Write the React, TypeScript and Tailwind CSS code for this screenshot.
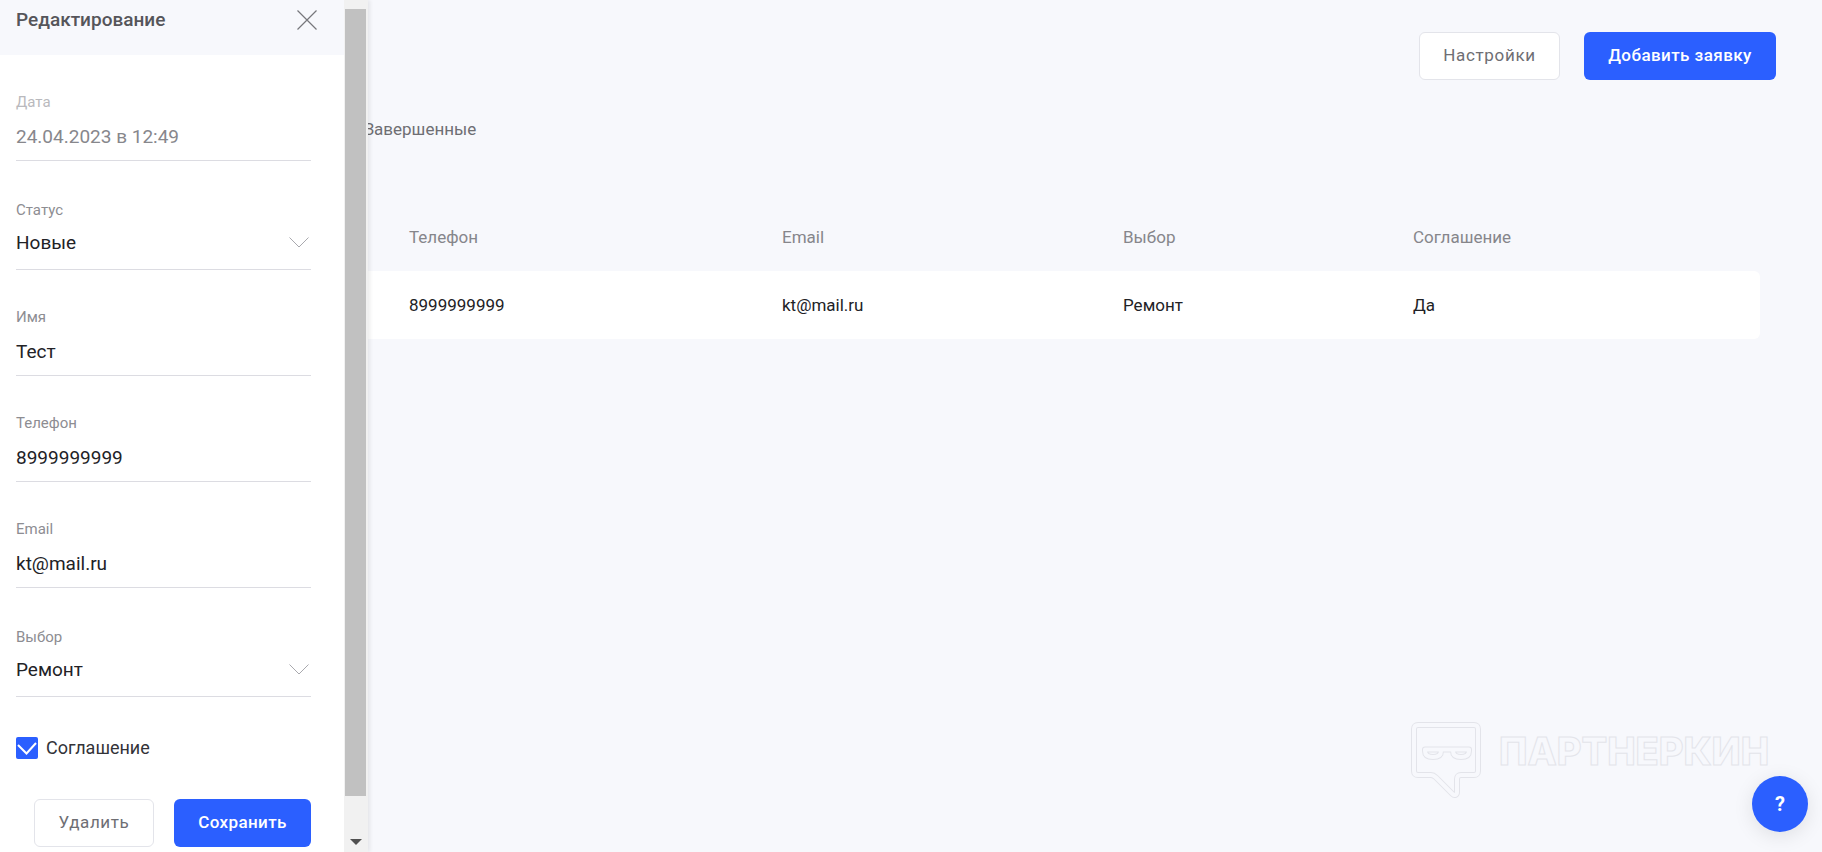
const font = { fontFamily: "Roboto, sans-serif" };

function Chevron() {
  return (
    <svg width="20" height="11" viewBox="0 0 20 11" fill="none" className="shrink-0 mr-[2px]">
      <path d="M0.5 0.5L10 10L19.5 0.5" stroke="#a9a9ae" strokeWidth="1" />
    </svg>
  );
}

function Field({ label, value, className, inner, select, muted, labelColor }: { label: string; value: string; className: string; inner: string; select?: boolean; muted?: boolean; labelColor?: string }) {
  return (
    <div className={className}>
      <div className={`text-[15px] leading-[20px] ${labelColor ?? "text-[#8d8d92]"}`}>{label}</div>
      <div className={`flex items-center justify-between border-b border-[#dcdce2] ${inner}`}>
        <span className={`text-[19px] leading-[28px] ${muted ? "text-[#87878c]" : "text-[#222226]"}`}>{value}</span>
        {select && <Chevron />}
      </div>
    </div>
  );
}

function Logo() {
  const bubble = "M9 5H65C67.5 5 69 6.5 69 9V51C69 53.5 67.5 55 65 55H52C49.5 55 48 56.5 48 59V72C48 75 45.5 76 43.5 74L27 57.5C25.5 56 24 55 22 55H9C6.5 55 5 53.5 5 51V9C5 6.5 6.5 5 9 5Z";
  const glasses = "M16 29.5H32V31C32 35 29 37 24 37C19 37 16 35 16 31ZM44 29.5H60V31C60 35 57 37 52 37C47 37 44 35 44 31ZM32 29.5H44";
  return (
    <svg width="76" height="82" viewBox="0 0 76 82" fill="none" className="shrink-0">
      <path d={bubble} stroke="#e3e4ea" strokeWidth="6" strokeLinejoin="round" />
      <path d={bubble} stroke="#f7f8fc" strokeWidth="4" strokeLinejoin="round" />
      <path d={glasses} stroke="#e3e4ea" strokeWidth="6" strokeLinejoin="round" />
      <path d={glasses} stroke="#f7f8fc" strokeWidth="4" strokeLinejoin="round" />
    </svg>
  );
}

export default function App() {
  return (
    <div style={font} className="flex h-[852px] w-[1822px] overflow-hidden bg-[#f7f8fc] relative">
      <aside className="flex shrink-0 h-full relative z-10 shadow-[2px_0_4px_rgba(0,0,0,0.08)]">
        <div className="w-[344px] bg-white flex flex-col">
          <div className="h-[55px] bg-[#f7f8fc] flex items-start justify-between pl-[16px] pr-[27px] pt-[7px]">
            <span className="text-[19px] leading-[26px] font-medium text-[#55555a]">Редактирование</span>
            <svg width="20" height="20" viewBox="0 0 20 20" fill="none" className="mt-[3px]">
              <path d="M0.5 0.5L19.5 19.5M19.5 0.5L0.5 19.5" stroke="#77777c" strokeWidth="1.2" />
            </svg>
          </div>
          <div className="pl-[16px] pr-[33px] pt-[37px]">
            <Field className="mb-[39px]" inner="h-[49px] pt-[1px]" label="Дата" value="24.04.2023 в 12:49" muted labelColor="text-[#b9b9bd]" />
            <Field className="mb-[37px]" inner="h-[50px] pb-[4px]" label="Статус" value="Новые" select />
            <Field className="mb-[37px]" inner="h-[49px] pt-[1px]" label="Имя" value="Тест" />
            <Field className="mb-[37px]" inner="h-[49px] pt-[1px]" label="Телефон" value="8999999999" />
            <Field className="mb-[39px]" inner="h-[49px] pt-[1px]" label="Email" value="kt@mail.ru" />
            <Field className="mb-[40px]" inner="h-[50px] pb-[4px]" label="Выбор" value="Ремонт" select />
            <div className="flex items-center gap-[8px] h-[22px]">
              <span className="w-[22px] h-[22px] rounded-[2px] bg-[#2b5fff] flex items-center justify-center">
                <svg width="22" height="22" viewBox="0 0 22 22" fill="none">
                  <path d="M2 8L10.5 16.5L20 6" stroke="white" strokeWidth="2" />
                </svg>
              </span>
              <span className="text-[18px] leading-[20px] text-[#333338]">Соглашение</span>
            </div>
            <div className="flex justify-end gap-[20px] mt-[40px]">
              <button className="w-[120px] h-[48px] rounded-[6px] bg-white border border-[#e3e4ea] text-[17px] tracking-[0.6px] text-[#6e6e73]">Удалить</button>
              <button className="w-[137px] h-[48px] rounded-[6px] bg-[#2b5fff] text-[17px] font-medium tracking-[0.4px] text-white">Сохранить</button>
            </div>
          </div>
        </div>
        <div className="w-[24px] bg-[#f1f1f1] flex flex-col items-start pl-[1px] pt-[9px]">
          <div className="w-[21px] h-[787px] bg-[#c1c1c1]" />
          <svg width="12" height="6" viewBox="0 0 12 6" className="ml-[5px] mt-[43px]">
            <path d="M0 0H12L6 6Z" fill="#505050" />
          </svg>
        </div>
      </aside>

      <main className="flex-1 min-w-0 flex flex-col">
        <div className="flex justify-end gap-[24px] pt-[32px] pr-[46px]">
          <button className="w-[141px] h-[48px] rounded-[6px] bg-white border border-[#e3e4ea] text-[17px] tracking-[0.66px] text-[#6e6e73]">Настройки</button>
          <button className="w-[192px] h-[48px] rounded-[6px] bg-[#2b5fff] text-[17px] font-medium tracking-[0.43px] text-white">Добавить заявку</button>
        </div>
        <div className="-ml-[4px] mt-[38px] text-[17px] leading-[22px] text-[#6e6e73]">Завершенные</div>
        <div className="mt-[85px] pr-[62px]">
          <div className="grid grid-cols-[373px_341px_290px_1fr] pl-[41px] h-[24px] items-center text-[17px] text-[#86868b]">
            <span>Телефон</span>
            <span>Email</span>
            <span>Выбор</span>
            <span>Соглашение</span>
          </div>
          <div className="grid grid-cols-[373px_341px_290px_1fr] pl-[41px] pt-[1px] mt-[22px] h-[68px] items-center bg-white rounded-r-[6px] text-[17px] text-[#222226]">
            <span>8999999999</span>
            <span>kt@mail.ru</span>
            <span>Ремонт</span>
            <span>Да</span>
          </div>
        </div>
      </main>

      <div className="absolute left-[1409px] top-[720px] flex items-start gap-[14px]">
        <Logo />
        <span className="text-[38px] leading-[44px] mt-[9px] font-extrabold text-transparent [-webkit-text-stroke:1px_#e3e4ea]" style={{ fontFamily: "Inter, sans-serif" }}>ПАРТНЕРКИН</span>
      </div>

      <button className="absolute left-[1752px] top-[776px] w-[56px] h-[56px] rounded-full bg-[#2b5fff] text-white text-[20px] font-bold shadow-[0_4px_20px_rgba(0,0,0,0.1)]">?</button>
    </div>
  );
}
